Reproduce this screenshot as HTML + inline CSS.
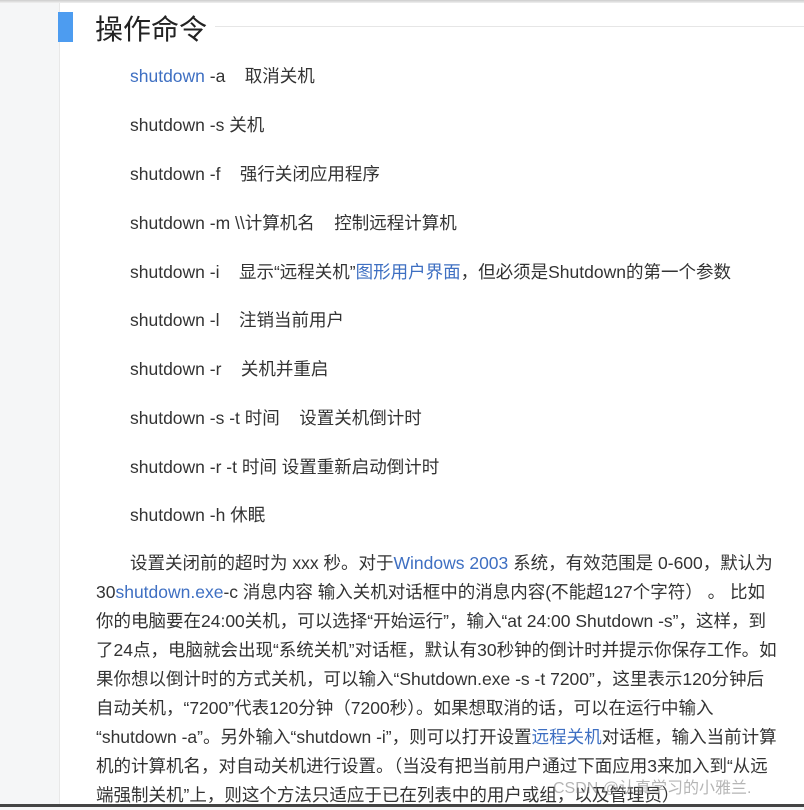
<!DOCTYPE html>
<html><head><meta charset="utf-8"><style>
body{margin:0;width:804px;height:807px;overflow:hidden;background:#f5f6f7;font-family:"Liberation Sans","Noto Sans CJK SC",sans-serif;color:#333;position:relative}
.main{position:absolute;left:59px;top:0;width:745px;height:804px;background:#fff;border-left:1px solid #e8e8e8}
.top{position:absolute;left:0;top:0;width:804px;height:3px;background:linear-gradient(#ccc,#f0f0f0)}
.bar{position:absolute;left:58px;top:12px;width:15px;height:30px;background:#4d9cf0}
h1{position:absolute;left:95px;top:8px;margin:0;font-size:28px;font-weight:normal;color:#222;line-height:40px;font-family:"Noto Sans CJK SC",sans-serif}
.hl{position:absolute;left:215px;top:26px;width:589px;height:1px;background:#e6e6e6}
.c{position:absolute;left:130px;font-size:17.5px;color:#333;white-space:pre;line-height:20px}
a{color:#3e6fc2;text-decoration:none}
.p{position:absolute;left:96px;top:549px;width:700px;font-size:17.5px;line-height:29px;color:#333;white-space:nowrap}
.bot{position:absolute;left:0;top:804px;width:804px;height:3px;background:#444}
.wm{position:absolute;left:553px;top:774px;font-size:16px;color:rgba(120,120,120,.55);white-space:nowrap}
</style></head><body>
<div class="main"></div>
<div class="top"></div>
<div class="bar"></div>
<h1>操作命令</h1>
<div class="hl"></div>
<div class="c" style="top:66px"><a>shutdown</a> -a    取消关机</div>
<div class="c" style="top:115px">shutdown -s 关机</div>
<div class="c" style="top:164px">shutdown -f    强行关闭应用程序</div>
<div class="c" style="top:213px">shutdown -m \\计算机名    控制远程计算机</div>
<div class="c" style="top:262px">shutdown -i    显示“远程关机”<a>图形用户界面</a>，但必须是Shutdown的第一个参数</div>
<div class="c" style="top:310px">shutdown -l    注销当前用户</div>
<div class="c" style="top:359px">shutdown -r    关机并重启</div>
<div class="c" style="top:408px">shutdown -s -t 时间    设置关机倒计时</div>
<div class="c" style="top:457px">shutdown -r -t 时间 设置重新启动倒计时</div>
<div class="c" style="top:505px">shutdown -h 休眠</div>
<div class="p"><span style="padding-left:34px"></span>设置关闭前的超时为 xxx 秒。对于<a>Windows 2003</a> 系统，有效范围是 0-600，默认为<br>30<a>shutdown.exe</a>-c 消息内容 输入关机对话框中的消息内容(不能超127个字符） 。   比如<br>你的电脑要在24:00关机，可以选择“开始运行”，输入“at 24:00 Shutdown -s”，这样，到<br>了24点，电脑就会出现“系统关机”对话框，默认有30秒钟的倒计时并提示你保存工作。如<br>果你想以倒计时的方式关机，可以输入“Shutdown.exe -s -t 7200”，这里表示120分钟后<br>自动关机，“7200”代表120分钟（7200秒）。如果想取消的话，可以在运行中输入<br>“shutdown -a”。另外输入“shutdown -i”，则可以打开设置<a>远程关机</a>对话框，输入当前计算<br>机的计算机名，对自动关机进行设置。（当没有把当前用户通过下面应用3来加入到“从远<br>端强制关机”上，则这个方法只适应于已在列表中的用户或组，以及管理员）</div>
<div class="wm">CSDN @认真学习的小雅兰.</div>
<div class="bot"></div>
</body></html>
